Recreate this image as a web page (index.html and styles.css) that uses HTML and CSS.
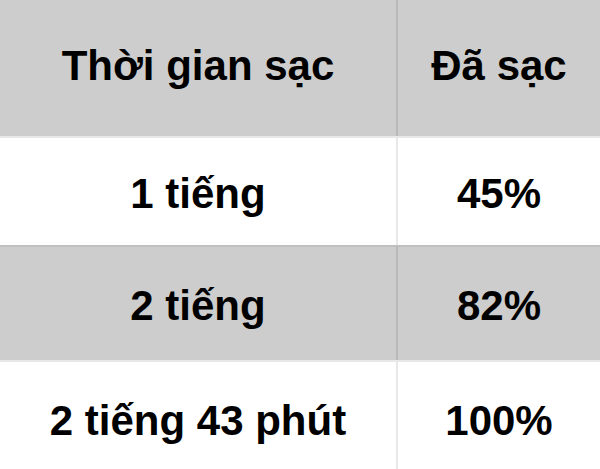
FILE: index.html
```html
<!DOCTYPE html>
<html lang="vi">
<head>
<meta charset="utf-8">
<title>Thời gian sạc</title>
<link rel="stylesheet" href="styles.css">
</head>
<body>
<div class="table">
  <div class="cell head c1">Thời gian sạc</div>
  <div class="cell head c2">Đã sạc</div>
  <div class="cell r1 c1">1 tiếng</div>
  <div class="cell r1 c2">45%</div>
  <div class="cell r2 c1">2 tiếng</div>
  <div class="cell r2 c2">82%</div>
  <div class="cell r3 c1">2 tiếng 43 phút</div>
  <div class="cell r3 c2">100%</div>
</div>
</body>
</html>
```
FILE: styles.css
```css
html, body {
  margin: 0;
  padding: 0;
  background: #ffffff;
  overflow: hidden;
}
.table {
  display: grid;
  grid-template-columns: 396px 204px;
  width: 600px;
}
.cell {
  box-sizing: border-box;
  text-align: center;
  font-family: "Liberation Sans", Arial, sans-serif;
  font-weight: bold;
  font-size: 42px;
  line-height: 48px;
  color: #000000;
  white-space: nowrap;
}
.c2 {
  border-left: 2px solid rgba(0, 0, 0, 0.09);
}
.head {
  background: #cdcdcd;
  height: 136px;
  padding-top: 42px;
}
.r1 {
  background: #ffffff;
  border-top: 2px solid rgba(0, 0, 0, 0.09);
  height: 109px;
  padding-top: 32px;
}
.r2 {
  background: #cdcdcd;
  border-top: 2px solid rgba(0, 0, 0, 0.06);
  height: 115px;
  padding-top: 35px;
}
.r3 {
  background: #ffffff;
  border-top: 2px solid rgba(0, 0, 0, 0.09);
  height: 120px;
  padding-top: 35px;
}
```
